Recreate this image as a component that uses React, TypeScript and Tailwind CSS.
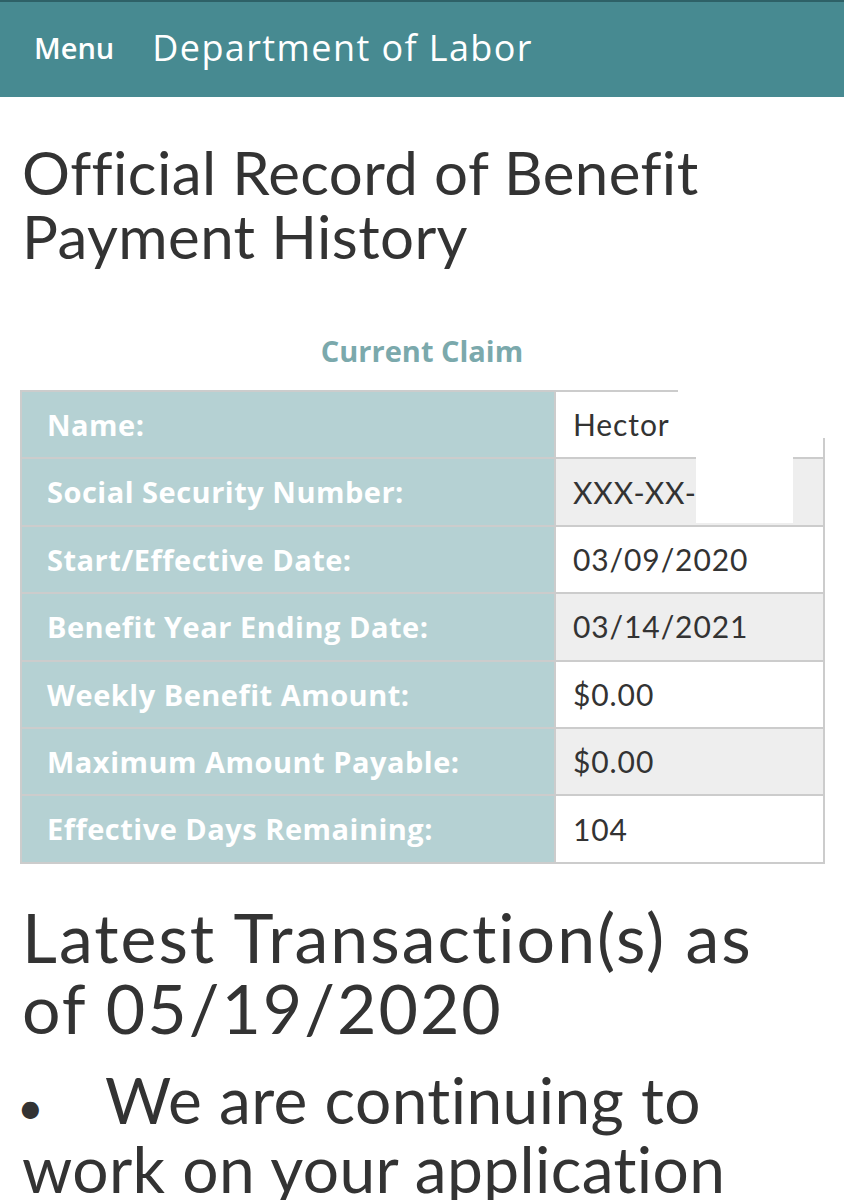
const rows: { label: string; value: string }[] = [
  { label: "Name:", value: "Hector" },
  { label: "Social Security Number:", value: "XXX-XX-" },
  { label: "Start/Effective Date:", value: "03/09/2020" },
  { label: "Benefit Year Ending Date:", value: "03/14/2021" },
  { label: "Weekly Benefit Amount:", value: "$0.00" },
  { label: "Maximum Amount Payable:", value: "$0.00" },
  { label: "Effective Days Remaining:", value: "104" },
];

export default function App() {
  return (
    <div className="relative min-h-[1200px] bg-white text-[#333333] font-['Lato','Open_Sans',sans-serif]">
      {/* top bar */}
      <header className="flex h-[97px] items-center border-t-2 border-[#2e6167] bg-[#478a91] pb-[3px] font-['Open_Sans',sans-serif] text-white">
        <span className="ml-[34px] text-[29px] font-semibold">Menu</span>
        <span className="ml-[38px] text-[36px] font-medium tracking-[1.4px]">Department of Labor</span>
      </header>

      <h1 className="mt-[43px] px-[22px] text-[60px] font-normal leading-[64px] tracking-[0.4px]">
        Official Record of Benefit Payment History
      </h1>

      <p className="mt-[66px] text-center font-['Open_Sans',sans-serif] text-[29px] font-bold leading-[34px] text-[#7ba9ac]">
        Current Claim
      </p>

      <table className="mx-[20px] mt-[22px] w-[805px] border-collapse border-2 border-[#cccccc]">
        <tbody>
          {rows.map((r, i) => (
            <tr key={r.label} className="h-[67.4px]">
              <td className="w-[534px] border-2 border-[#cccccc] bg-[#b5d1d3] pl-[25px] font-['Open_Sans',sans-serif] text-[29px] font-bold tracking-[0.5px] text-white">
                {r.label}
              </td>
              <td
                className={
                  i % 2 === 1
                    ? "border-2 border-[#cccccc] bg-[#eeeeee] pl-[17px] text-[30px] tracking-[0.9px] text-[#333333]"
                    : "border-2 border-[#cccccc] bg-white pl-[17px] text-[30px] tracking-[0.9px] text-[#333333]"
                }
              >
                {r.value}
              </td>
            </tr>
          ))}
        </tbody>
      </table>

      <h2 className="mt-[37px] w-[800px] px-[22px] text-[68px] font-normal leading-[71px] tracking-[2px]">
        Latest Transaction(s) as of 05/19/2020
      </h2>

      <p className="mt-[26px] w-[800px] px-[22px] text-[64px] leading-[62px] tracking-[0.4px]">
        <span className="-ml-[5px] inline-block w-[88px] text-[46px]">•</span>We are continuing to work on your application
      </p>

      {/* redaction patches */}
      <div className="absolute left-[698px] top-[100px] h-[240px] w-[146px] bg-white" />
      <div className="absolute left-[678px] top-[338px] h-[100px] w-[166px] bg-white" />
      <div className="absolute left-[696px] top-[437px] h-[86px] w-[97px] bg-white" />
    </div>
  );
}
